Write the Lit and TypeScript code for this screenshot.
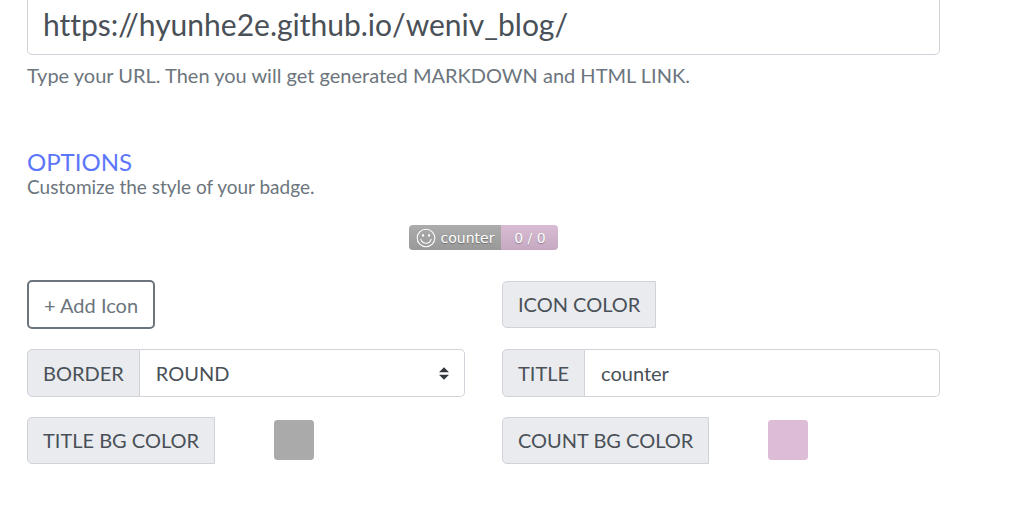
import { LitElement, html, css } from "lit";
import { customElement, state } from "lit/decorators.js";

@customElement("app-root")
export class AppRoot extends LitElement {
  @state() private url = "https://hyunhe2e.github.io/weniv_blog/";
  @state() private title_ = "counter";
  @state() private titleBg = "#aaaaaa";
  @state() private countBg = "#dcbcd7";

  static styles = css`
    :host {
      display: block;
      overflow: hidden;
      font-family: Lato, "Liberation Sans", sans-serif;
      font-size: 20px;
      line-height: 30px;
      font-variant-ligatures: none;
      color: #495057;
    }
    * {
      box-sizing: border-box;
    }
    .page {
      padding: 0 76px 48px 27px;
    }
    input,
    select,
    button {
      font: inherit;
      font-variant-ligatures: none;
      color: inherit;
      margin: 0;
      outline: none;
    }
    .url {
      display: block;
      width: 100%;
      height: 62px;
      margin-top: -7px;
      padding: 0 15px;
      border: 1px solid #d1d3da;
      border-radius: 5px;
      background: #fff;
      font-size: 30px;
    }
    .hint {
      margin: 5px 0 0;
      color: #6c757d;
    }
    .heading {
      margin: 59px 0 0;
      font-size: 24px;
      font-weight: 400;
      line-height: 26px;
      color: #5c76fb;
    }
    .sub {
      margin: 0;
      font-size: 19px;
      line-height: 24px;
      color: #6c757d;
    }
    .preview {
      display: flex;
      justify-content: center;
      margin: 26px 0 30px;
    }
    .badge {
      display: flex;
      height: 25px;
      border-radius: 4px;
      overflow: hidden;
      font-family: "DejaVu Sans", Verdana, sans-serif;
      font-size: 14px;
      line-height: 26px;
      color: #fff;
      text-shadow: 0 1px 1px rgba(1, 1, 1, 0.3);
    }
    .part {
      display: flex;
      align-items: flex-start;
      background-image: linear-gradient(rgba(187, 187, 187, 0.1), rgba(0, 0, 0, 0.1));
    }
    .name {
      gap: 5px;
      padding: 0 7px;
    }
    .count {
      justify-content: center;
      width: 57px;
    }
    .smile {
      display: block;
      align-self: center;
      width: 20px;
      height: 20px;
    }
    .grid {
      display: grid;
      grid-template-columns: 1fr 1fr;
      gap: 20px 37px;
      align-items: center;
    }
    .add {
      justify-self: start;
      height: 49px;
      padding: 0 15px;
      border: 2px solid #6c757d;
      border-radius: 5px;
      background: #fff;
      color: #6c757d;
      cursor: pointer;
    }
    .group {
      display: flex;
      height: 48px;
    }
    .label {
      display: flex;
      align-items: center;
      flex: none;
      padding: 0 15px;
      border: 1px solid #d1d3da;
      border-radius: 5px 0 0 5px;
      background: #eaebef;
      white-space: nowrap;
    }
    .field {
      flex: 1;
      min-width: 0;
      padding: 0 16px;
      border: 1px solid #d1d3da;
      border-left: 0;
      border-radius: 0 5px 5px 0;
      background-color: #fff;
    }
    .select {
      appearance: none;
      background: #fff
        url("data:image/svg+xml,%3Csvg xmlns='http://www.w3.org/2000/svg' viewBox='0 0 4 5'%3E%3Cpath fill='%23343a40' d='M2 0L0 2h4zm0 5L0 3h4z'/%3E%3C/svg%3E")
        no-repeat right 15px center / 10px 13px;
    }
    .color {
      display: flex;
      align-items: flex-start;
      gap: 59px;
      height: 47px;
    }
    .color .label {
      height: 47px;
      padding-bottom: 1px;
    }
    .swatch {
      appearance: none;
      width: 40px;
      height: 40px;
      margin-top: 3px;
      padding: 0;
      border: 0;
      border-radius: 3px;
      background: none;
      overflow: hidden;
      cursor: pointer;
    }
    .swatch::-webkit-color-swatch-wrapper {
      padding: 0;
    }
    .swatch::-webkit-color-swatch {
      border: 0;
      border-radius: 3px;
      background-image: linear-gradient(135deg, rgba(0, 0, 0, 0.14) 1px, transparent 1px),
        linear-gradient(315deg, rgba(0, 0, 0, 0.14) 1px, transparent 1px);
    }
  `;

  private colorRow(id: string, text: string, value: string, set?: (v: string) => void) {
    return html`<div class="color">
      <label class="label" for=${id}>${text}</label>
      <input
        class="swatch"
        id=${id}
        type="color"
        .value=${value}
        @input=${(e: Event) => set?.((e.target as HTMLInputElement).value)}
      />
    </div>`;
  }

  render() {
    return html`<main class="page">
      <input
        class="url"
        type="text"
        aria-label="URL"
        aria-describedby="hint"
        spellcheck="false"
        .value=${this.url}
      />
      <p class="hint" id="hint">Type your URL. Then you will get generated MARKDOWN and HTML LINK.</p>

      <h2 class="heading">OPTIONS</h2>
      <p class="sub">Customize the style of your badge.</p>

      <div class="preview">
        <div class="badge">
          <span class="part name" style="background-color:${this.titleBg}">
            <svg class="smile" viewBox="0 0 20 20" fill="none" stroke="#fff" aria-hidden="true">
              <circle cx="10" cy="10" r="8.8" stroke-width="1.1" />
              <path d="M4.9 11.4c.7 2.6 2.6 3.8 5.1 3.8s4.4-1.2 5.1-3.8" stroke-width="1.1" stroke-linecap="round" />
              <ellipse cx="7" cy="7.4" rx="1" ry="1.3" fill="#fff" stroke="none" />
              <ellipse cx="13" cy="7.4" rx="1" ry="1.3" fill="#fff" stroke="none" />
            </svg>
            <span>${this.title_}</span>
          </span>
          <span class="part count" style="background-color:${this.countBg}">0 / 0</span>
        </div>
      </div>

      <div class="grid">
        <button class="add" type="button">+ Add Icon</button>
        ${this.colorRow("icon-color", "ICON COLOR", "#ffffff")}
        <div class="group">
          <label class="label" for="border">BORDER</label>
          <select class="field select" id="border">
            <option>ROUND</option>
            <option>FLAT</option>
          </select>
        </div>
        <div class="group">
          <label class="label" for="title">TITLE</label>
          <input
            class="field"
            id="title"
            type="text"
            .value=${this.title_}
            @input=${(e: Event) => (this.title_ = (e.target as HTMLInputElement).value)}
          />
        </div>
        ${this.colorRow("title-bg", "TITLE BG COLOR", this.titleBg, (v) => (this.titleBg = v))}
        ${this.colorRow("count-bg", "COUNT BG COLOR", this.countBg, (v) => (this.countBg = v))}
      </div>
    </main>`;
  }
}
